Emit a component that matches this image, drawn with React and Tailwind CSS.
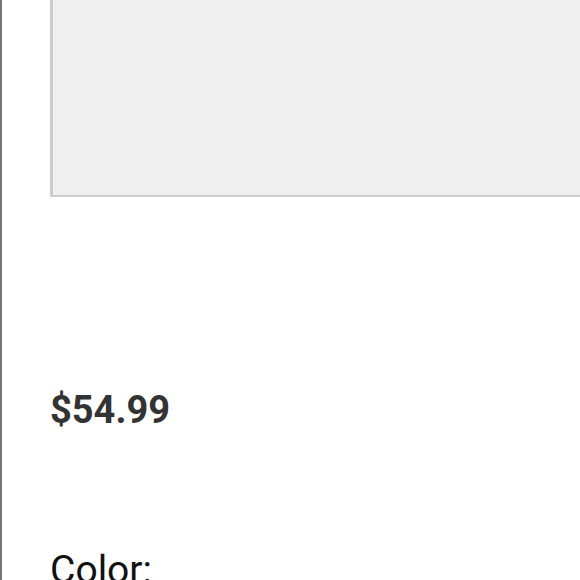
export default function App() {
    return (
        <div className="w-[580px] h-[580px] overflow-hidden bg-white border-l-2 border-[#777] font-['Roboto',sans-serif]">
            {/* Product image placeholder */}
            <div className="ml-[48px] w-[600px] h-[197px] bg-[#efefef] border-l-[3px] border-b-2 border-[#cccccc]" />

            {/* Price */}
            <p className="mt-[189px] ml-[48px] text-[38px] leading-[48px] font-bold text-[#333333]">$54.99</p>

            {/* Options */}
            <p className="mt-[112px] ml-[48px] text-[39px] leading-[48px] text-[#111111]">Color:</p>
        </div>
    );
}
